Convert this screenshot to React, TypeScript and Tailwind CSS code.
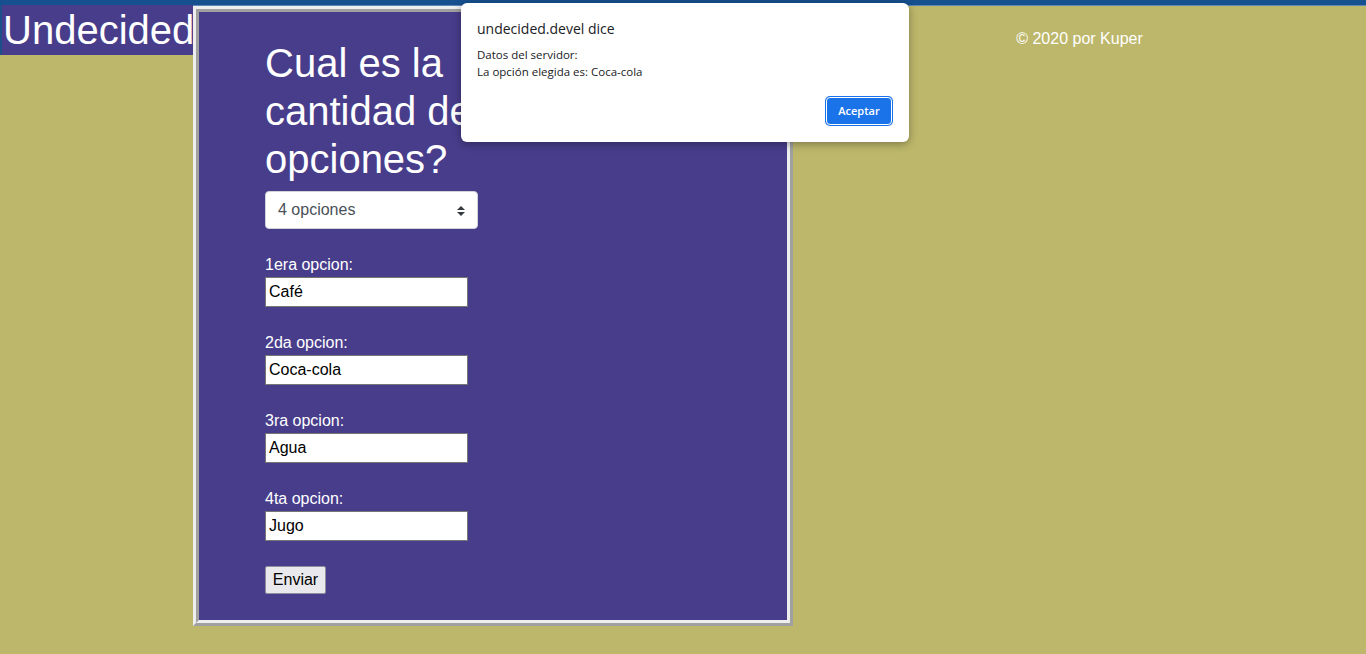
const opciones = [
  { label: "1era opcion:", value: "Café" },
  { label: "2da opcion:", value: "Coca-cola" },
  { label: "3ra opcion:", value: "Agua" },
  { label: "4ta opcion:", value: "Jugo" },
];

const SelectArrows = () => (
  <svg width="8" height="10" viewBox="0 0 4 5" className="absolute right-[12px] top-[14px]">
    <path d="M2 0L0 2h4zm0 5L0 3h4z" fill="#343a40" />
  </svg>
);

const AlertDialog = () => (
  <div className="absolute left-[461px] top-[3px] w-[448px] h-[139px] bg-white rounded-[6px] shadow-[0_2px_8px_rgba(0,0,0,0.35)] px-[16px] pt-[16px] font-['Open_Sans',sans-serif] text-[#202124]">
    <p className="text-[14px] leading-[20px]">undecided.devel dice</p>
    <div className="mt-[7px] text-[11.5px] leading-[17px]">
      <p>Datos del servidor:</p>
      <p>La opción elegida es: Coca-cola</p>
    </div>
    <div className="flex justify-end mt-[17px] pr-[1px]">
      <button className="w-[66px] h-[28px] rounded-[4px] bg-[#1a73e8] border border-white shadow-[0_0_0_1px_#1a73e8] text-white text-[11px] font-semibold">
        Aceptar
      </button>
    </div>
  </div>
);

export default function App() {
  return (
    <div className="relative w-full min-h-[654px] bg-[#bdb76b] font-['Liberation_Sans',Arial,sans-serif]">
      <div className="h-[6px] bg-[#16508f] border-b border-[#5d87b7]" />
      <div className="flex items-start">
        <div className="w-[193px] h-[50px] -mt-[1px] bg-[#483d8b] border-l-2 border-[#1d4f8a] text-white text-[40px] leading-[50px] pl-[1px]">
          Undecided
        </div>
        <div className="w-[600px] border-t-[3px] border-l-[3px] border-t-[#eeeeee] border-l-[#eeeeee] border-b-[3px] border-r-[3px] border-b-[#a0a0a0] border-r-[#a0a0a0]">
          <div className="border-t-[3px] border-l-[3px] border-t-[#a0a0a0] border-l-[#a0a0a0] border-b-[3px] border-r-[3px] border-b-[#eeeeee] border-r-[#eeeeee] bg-[#483d8b] pl-[66px] pt-[27px] pb-[26px]">
            <div className="w-[213px]">
              <h1 className="text-white text-[40px] leading-[48px] mb-[8px]">
                Cual es la cantidad de opciones?
              </h1>
              <div className="relative h-[38px] bg-white rounded-[4px] border border-[#ced4da] pl-[12px] text-[16px] leading-[36px] text-[#495057]">
                4 opciones
                <SelectArrows />
              </div>
              <div className="mt-[24px] flex flex-col gap-[24px]">
                {opciones.map((o) => (
                  <div key={o.label}>
                    <p className="text-white text-[16px] leading-[24px]">{o.label}</p>
                    <div className="w-[203px] h-[30px] bg-white border border-[#767676] pl-[3px] text-[16px] leading-[28px] text-black">
                      {o.value}
                    </div>
                  </div>
                ))}
              </div>
              <button className="mt-[25px] w-[61px] h-[28px] bg-[#e9e9ed] border border-[#8f8f9d] rounded-[2px] text-[16px] text-black">
                Enviar
              </button>
            </div>
          </div>
        </div>
        <div className="flex-1 text-center text-white text-[16px] leading-[18px] pt-[24px]">
          © 2020 por Kuper
        </div>
      </div>
      <AlertDialog />
    </div>
  );
}
